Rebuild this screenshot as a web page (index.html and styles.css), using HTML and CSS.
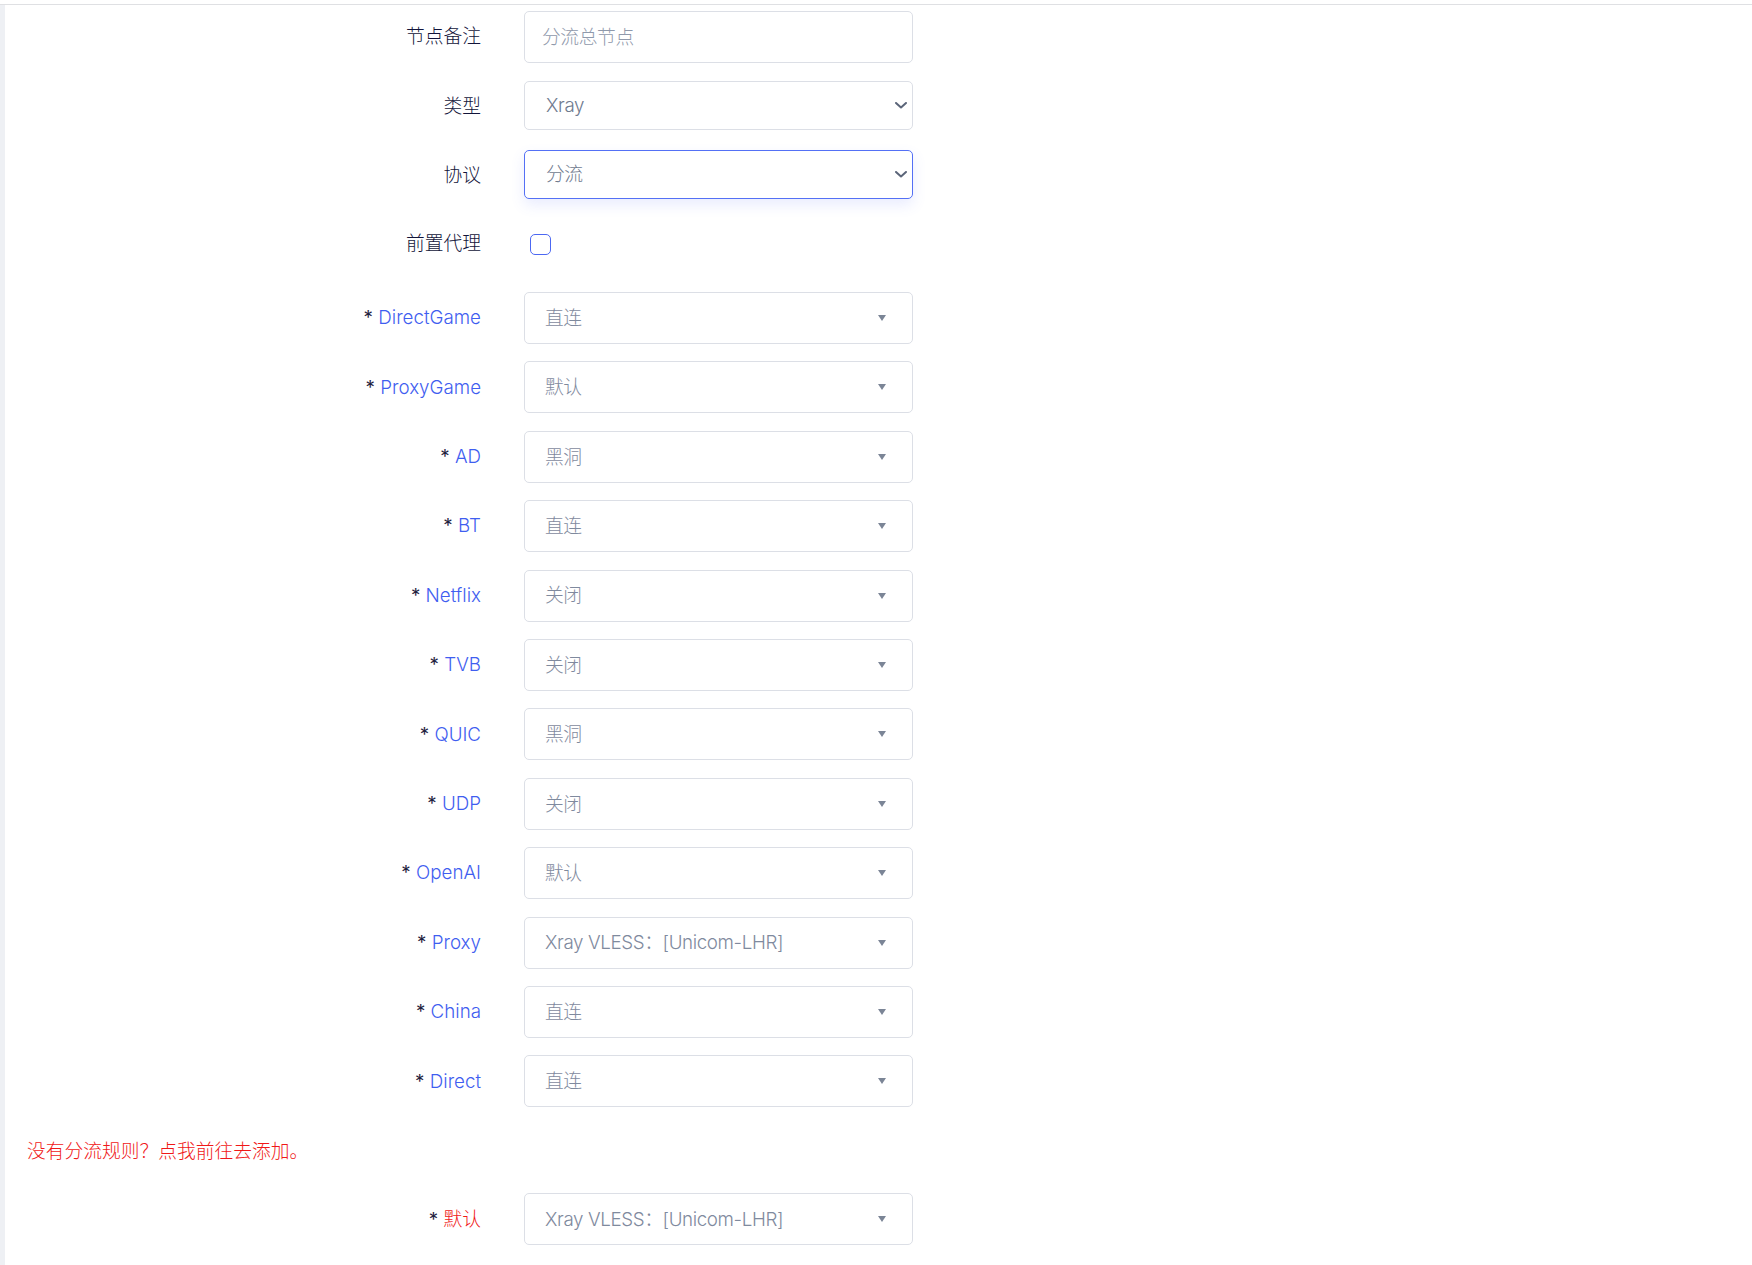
FILE: index.html
```html
<!DOCTYPE html>
<html lang="zh-CN">
<head>
<meta charset="utf-8">
<title>分流节点</title>
<link rel="stylesheet" href="styles.css">
</head>
<body>
<div class="topbar"></div>
<div class="layout">
  <aside class="rail"></aside>
  <main class="form">
    <div class="row row-remark">
      <span class="lbl">节点备注</span>
      <div class="field field-input"><span class="ph">分流总节点</span></div>
    </div>
    <div class="row row-type">
      <span class="lbl">类型</span>
      <div class="field field-native"><span class="val">Xray</span>
        <svg class="chev" width="12" height="7" viewBox="0 0 12 7"><path d="M1 1l5 4.5L11 1" fill="none" stroke="#5b6579" stroke-width="2" stroke-linecap="round" stroke-linejoin="round"/></svg>
      </div>
    </div>
    <div class="row row-proto">
      <span class="lbl">协议</span>
      <div class="field field-native is-focus"><span class="val">分流</span>
        <svg class="chev" width="12" height="7" viewBox="0 0 12 7"><path d="M1 1l5 4.5L11 1" fill="none" stroke="#5b6579" stroke-width="2" stroke-linecap="round" stroke-linejoin="round"/></svg>
      </div>
    </div>
    <div class="row row-check">
      <span class="lbl">前置代理</span>
      <div class="checkwrap"><span class="checkbox"></span></div>
    </div>

    <div class="rules">
      <div class="row"><span class="lbl"><i>*</i> <b>DirectGame</b></span><div class="field field-sel"><span class="val">直连</span><span class="caret"></span></div></div>
      <div class="row"><span class="lbl"><i>*</i> <b>ProxyGame</b></span><div class="field field-sel"><span class="val">默认</span><span class="caret"></span></div></div>
      <div class="row"><span class="lbl"><i>*</i> <b>AD</b></span><div class="field field-sel"><span class="val">黑洞</span><span class="caret"></span></div></div>
      <div class="row"><span class="lbl"><i>*</i> <b>BT</b></span><div class="field field-sel"><span class="val">直连</span><span class="caret"></span></div></div>
      <div class="row"><span class="lbl"><i>*</i> <b>Netflix</b></span><div class="field field-sel"><span class="val">关闭</span><span class="caret"></span></div></div>
      <div class="row"><span class="lbl"><i>*</i> <b>TVB</b></span><div class="field field-sel"><span class="val">关闭</span><span class="caret"></span></div></div>
      <div class="row"><span class="lbl"><i>*</i> <b>QUIC</b></span><div class="field field-sel"><span class="val">黑洞</span><span class="caret"></span></div></div>
      <div class="row"><span class="lbl"><i>*</i> <b>UDP</b></span><div class="field field-sel"><span class="val">关闭</span><span class="caret"></span></div></div>
      <div class="row"><span class="lbl"><i>*</i> <b>OpenAI</b></span><div class="field field-sel"><span class="val">默认</span><span class="caret"></span></div></div>
      <div class="row"><span class="lbl"><i>*</i> <b>Proxy</b></span><div class="field field-sel"><span class="val">Xray VLESS：[Unicom-LHR]</span><span class="caret"></span></div></div>
      <div class="row"><span class="lbl"><i>*</i> <b>China</b></span><div class="field field-sel"><span class="val">直连</span><span class="caret"></span></div></div>
      <div class="row"><span class="lbl"><i>*</i> <b>Direct</b></span><div class="field field-sel"><span class="val">直连</span><span class="caret"></span></div></div>
    </div>

    <p class="hint">没有分流规则？点我前往去添加。</p>

    <div class="row row-default">
      <span class="lbl"><i>*</i> <b class="red">默认</b></span>
      <div class="field field-sel"><span class="val">Xray VLESS：[Unicom-LHR]</span><span class="caret"></span></div>
    </div>
  </main>
</div>
</body>
</html>
```

FILE: styles.css
```css
* {
  box-sizing: border-box;
}

html,
body {
  margin: 0;
  padding: 0;
  background: #ffffff;
}

body {
  height: 1265px;
  overflow: hidden;
  font-family: Inter, "Noto Sans CJK SC", "Noto Sans", sans-serif;
  font-size: 18.75px;
  font-weight: 300;
  color: #1f2240;
}

.topbar {
  height: 5px;
  border-bottom: 1px solid #dfe0e3;
}

.layout {
  display: flex;
  height: 1260px;
}

.rail {
  width: 5px;
  flex: none;
  background: #eef0f4;
}

.form {
  flex: 1;
  padding-top: 6px;
}

.row {
  display: grid;
  grid-template-columns: 476px 389px;
  column-gap: 43px;
  align-items: center;
}

.lbl {
  text-align: right;
  white-space: nowrap;
  line-height: 1.3;
  font-weight: 300;
  color: #12143a;
}

.row-type .lbl,
.row-proto .lbl {
  padding-top: 3px;
}

.rules .lbl,
.row-default .lbl {
  padding-top: 1px;
}

.lbl i {
  font-style: normal;
  font-weight: 400;
  color: #1f2240;
}

.lbl b {
  font-weight: 300;
  color: #3f5ef0;
}

.lbl b.red {
  color: #f01818;
}

.field {
  height: 52px;
  border: 1px solid #dcdfe6;
  border-radius: 5px;
  background: #fff;
  display: flex;
  align-items: center;
  padding: 0 20px;
  color: #7f8a9e;
  white-space: nowrap;
}

.field .val,
.field .ph {
  flex: 1;
  line-height: 1.3;
  padding-top: 2px;
  letter-spacing: -0.02em;
}

.field-input {
  padding-left: 17px;
}

.ph {
  color: #8f99ab;
}

.field-native {
  height: 49px;
  padding: 0 5px 0 21px;
  color: #6f7b8f;
}

.chev {
  flex: none;
  display: block;
}

.is-focus {
  border-color: #5470f5;
  box-shadow: 0 6px 14px rgba(84, 112, 245, 0.13);
}

.row-type {
  margin-top: 18px;
}

.row-proto {
  margin-top: 20px;
}

.row-check {
  margin-top: 19.5px;
  height: 52px;
}

.checkwrap {
  display: flex;
  align-items: center;
  padding-left: 6px;
}

.checkbox {
  width: 21px;
  height: 21px;
  border: 1.5px solid #4c68f2;
  border-radius: 5px;
  background: #fff;
}

.rules {
  margin-top: 21.5px;
  display: flex;
  flex-direction: column;
  gap: 17.4px;
}

.caret {
  flex: none;
  width: 0;
  height: 0;
  margin-right: 6px;
  border-left: 4px solid transparent;
  border-right: 4px solid transparent;
  border-top: 6px solid #7b8596;
}

.hint {
  margin: 32px 0 0 22px;
  height: 26px;
  line-height: 26px;
  font-size: 18.75px;
  font-weight: 300;
  color: #f01818;
}

.row-default {
  margin-top: 28px;
}
```
